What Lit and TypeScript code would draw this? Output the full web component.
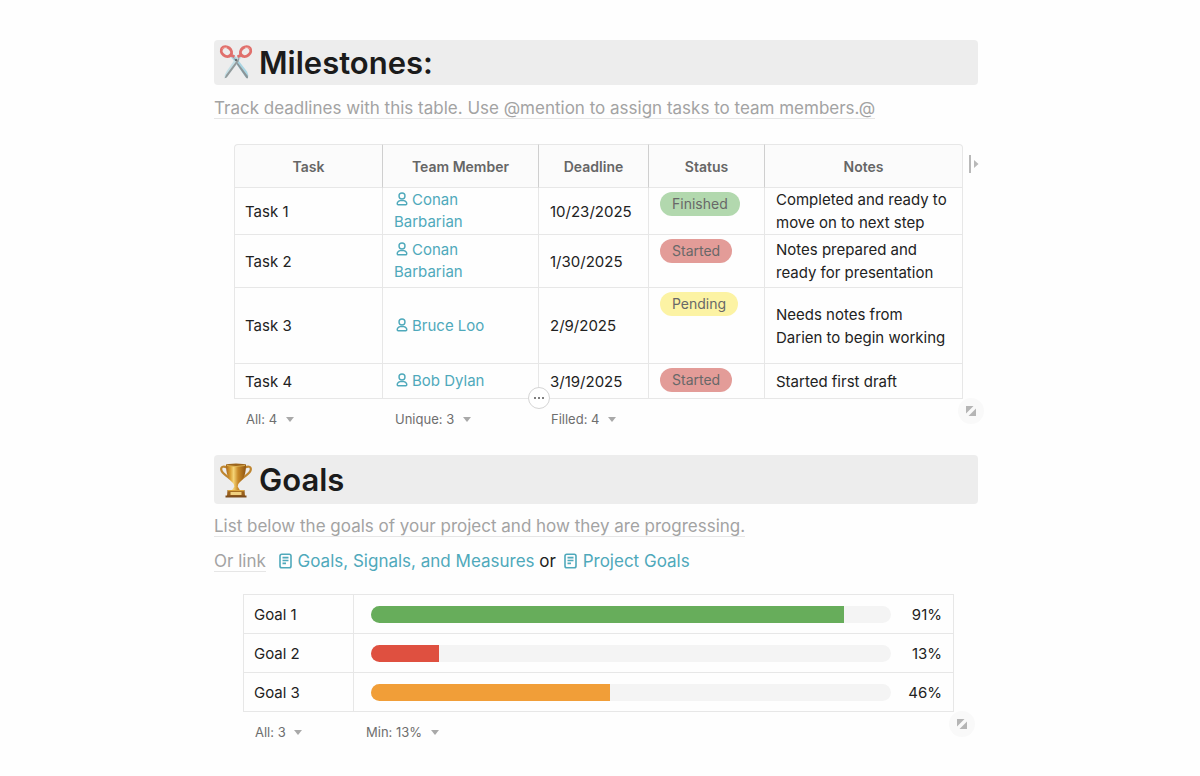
import { LitElement, html, css, svg } from "lit";
import { customElement, property } from "lit/decorators.js";

interface Task {
  name: string;
  member: string;
  deadline: string;
  status: "Finished" | "Started" | "Pending";
  notes: string;
  height: number;
}

const TASKS: Task[] = [
  { name: "Task 1", member: "Conan Barbarian", deadline: "10/23/2025", status: "Finished", notes: "Completed and ready to move on to next step", height: 47 },
  { name: "Task 2", member: "Conan Barbarian", deadline: "1/30/2025", status: "Started", notes: "Notes prepared and ready for presentation", height: 53 },
  { name: "Task 3", member: "Bruce Loo", deadline: "2/9/2025", status: "Pending", notes: "Needs notes from Darien to begin working", height: 76 },
  { name: "Task 4", member: "Bob Dylan", deadline: "3/19/2025", status: "Started", notes: "Started first draft", height: 35 },
];

const GOALS = [
  { name: "Goal 1", value: 91, tone: "green" },
  { name: "Goal 2", value: 13, tone: "red" },
  { name: "Goal 3", value: 46, tone: "orange" },
];

const personIcon = svg`<svg class="person" viewBox="0 0 12 14" width="12" height="14" aria-hidden="true">
  <circle cx="6" cy="4" r="3"/><path d="M4 8.600C2.200 9.100 1.200 10.200 1.200 11.700c0 .7.400 1.100 1 1.100h7.600c.6 0 1-.4 1-1.100 0-1.500-1-2.600-2.800-3.100Z"/></svg>`;

const docIcon = svg`<svg class="doc" viewBox="0 0 13 16" width="13" height="16" aria-hidden="true">
  <rect x="1" y="1.200" width="11" height="13.600" rx="1.800"/><path d="M3.500 4.600h6M3.500 7.500h6M3.500 10.400h3.500"/></svg>`;

const scissors = svg`<svg class="emoji" viewBox="0 2 36 36" width="36" height="36" aria-hidden="true">
  <path d="M11.500 12.500L15.800 11.600 29 28.500Q31 32 30 35.200L27.800 34.600 16.500 18.500Z" fill="#a9d5e2"/>
  <path d="M15 13.500L17 18.500 28.500 35.200 30 35.200 29.800 33Z" fill="#8b9497"/>
  <path d="M24.500 12.500L20.200 11.600 8.500 28.500Q6 32 6.600 35.200L8.800 34.200 20.500 18.500Z" fill="#c5dfe5"/>
  <path d="M21.500 14L8 32 6.600 35.200 8.700 34.600 20.500 18.500Z" fill="#929a9b"/>
  <circle cx="18" cy="17" r="1.200" fill="#646d70"/>
  <ellipse cx="8.400" cy="8.600" rx="5.500" ry="4.500" transform="rotate(38 8.400 8.600)" fill="none" stroke="#e0706c" stroke-width="3"/>
  <ellipse cx="27.600" cy="8.600" rx="5.500" ry="4.500" transform="rotate(-38 27.600 8.600)" fill="none" stroke="#e0706c" stroke-width="3"/>
  <path d="M12.500 12l4 1.800M23.500 12l-4 1.800" stroke="#e0706c" stroke-width="2.600"/>
  <path d="M4 6.200q2-2.500 5-1.800M32 6.200q-2-2.500-5-1.800" fill="none" stroke="#f39a93" stroke-width="1"/></svg>`;

const trophy = svg`<svg class="emoji" viewBox="0 0 36 36" width="36" height="36" aria-hidden="true">
  <defs><linearGradient id="gold"><stop stop-color="#a8671a"/><stop offset=".22" stop-color="#dba236"/><stop offset=".38" stop-color="#f5d476"/><stop offset=".6" stop-color="#c98a28"/><stop offset="1" stop-color="#8e5412"/></linearGradient></defs>
  <path d="M9 5.500C5 3.500 2.600 5 3.300 8c.8 3.500 4.800 5 9 9M27 5.500c4-2 6.400-.5 5.700 2.500-.8 3.500-4.800 5-9 9" fill="none" stroke="#bf8630" stroke-width="2.200"/>
  <path d="M8 2.500h20c0 9-2 14.500-6 17.500q-2.300 1.600-2.300 4.500l2.300 4h-8l2.300-4q0-2.900-2.300-4.500C10 17 8 11.500 8 2.500Z" fill="url(#gold)"/>
  <ellipse cx="18" cy="3" rx="10" ry="1.500" fill="#9c651c"/>
  <path d="M9 3.500q9 2 18 0" fill="none" stroke="#e8bf5c" stroke-width=".8"/>
  <path d="M9.500 28h17l.5 6H9Z" fill="#9a611d"/><path d="M10 28h16v1.200H10Z" fill="#dca63e"/><rect x="12.500" y="30" width="11" height="3" fill="#f0d080"/>
  <path d="M7.500 33.500h21v2h-21Z" fill="#7d4d1c"/></svg>`;

const resizeIcon = svg`<svg viewBox="0 0 10 10" width="10" height="10" aria-hidden="true"><path d="M0 0h7.500L0 7.500ZM10 2.500V10H2.500Z"/></svg>`;

@customElement("column-summary")
class ColumnSummary extends LitElement {
  @property() label = "";
  @property() value = "";

  static styles = css`
    :host { display: inline-block; }
    .summary { display: inline-flex; align-items: center; gap: 8px; }
    .choice {
      appearance: none; border: 0; padding: 0; margin: 0; background: none;
      font: 13px/16px Inter, "Liberation Sans", sans-serif; color: #6e6e6e;
    }
    .caret { fill: #a9a9a9; }
  `;

  render() {
    return html`<label class="summary">
      <select class="choice" aria-label=${this.label + " summary"}><option>${this.value}</option></select>
      <svg class="caret" viewBox="0 0 8 5" width="8" height="5" aria-hidden="true"><path d="M0 0h8L4 5Z"/></svg>
    </label>`;
  }
}

@customElement("app-root")
class AppRoot extends LitElement {
  static styles = css`
    :host {
      display: block; min-height: 100vh; box-sizing: border-box; padding: 40px 8px 24px 0;
      background: #fefefe; color: #222; font-family: Inter, "Liberation Sans", sans-serif;
    }
    .page { max-width: 764px; margin: 0 auto; }
    .title {
      display: flex; align-items: center; gap: 5px; margin: 0; padding: 2px 4px;
      border-radius: 4px; background: #ededed; color: #1b1b1b;
      font-size: 31px; line-height: 41px; font-weight: 600;
    }
    .title.roomy { padding: 4px; margin-top: 17px; }
    .emoji { flex: none; }
    .hint { margin: 13px 0 0; font-size: 17px; line-height: 21px; color: #a3a3a3; }
    .title.roomy + .hint { margin-top: 12px; }
    .hint.links { margin-top: 14px; }
    .underlined { border-bottom: 1px solid #e6e6e6; }
    a { color: #4fa9bb; text-decoration: none; }
    .doc { fill: none; stroke: #4fa9bb; stroke-width: 1.6; vertical-align: -2px; margin-right: 6px; }
    .doc-link { margin-left: 3px; }
    .doc-link.first { margin-left: 8px; }
    .or { color: #222; }
    .frame { position: relative; }
    .tasks-frame { margin: 25px 15px 0 20px; }
    .goals-frame { margin: 22px 24px 0 29px; }
    table { width: 100%; table-layout: fixed; border-collapse: separate; border-spacing: 0; font-size: 15px; }
    th, td { box-sizing: border-box; padding: 0 11px; text-align: left; font-weight: 400; }
    tbody th, tbody td { border: 0 solid #e7e7e7; border-width: 0 1px 1px 0; }
    tbody th { border-left-width: 1px; padding-left: 10px; }
    .tasks thead th {
      height: 44px; text-align: center; font-size: 14px; font-weight: 600; color: #666; background: #fbfbfb;
      border: 0 solid #e7e7e7; border-width: 1px 1px 1px 0; border-right-color: #cfcfcf;
    }
    .tasks thead th:first-child { border-left: 1px solid #e7e7e7; border-top-left-radius: 4px; }
    .tasks thead th:last-child { border-right-color: #e7e7e7; border-top-right-radius: 4px; }
    .c-task { width: 149px; } .c-member { width: 156px; } .c-date { width: 110px; } .c-status { width: 116px; }
    .member { line-height: 22px; }
    .member a { display: inline-block; max-width: 100px; }
    .person { fill: none; stroke: #4fa9bb; stroke-width: 1.4; vertical-align: -1px; margin: 0 4px 0 2px; }
    .notes { line-height: 23px; }
    .tasks td.status { vertical-align: top; padding-top: 4px; }
    .pill {
      display: inline-block; vertical-align: top; padding: 0 12px; border-radius: 12px;
      font-size: 14px; line-height: 24px; color: #686868;
    }
    .Finished { background: #b2d8ae; } .Started { background: #e39c98; } .Pending { background: #fcf3a4; }
    tfoot td { height: 39px; padding-left: 12px; position: relative; }
    .round { position: absolute; display: grid; place-items: center; border-radius: 50%; padding: 0; }
    .more { width: 22px; height: 22px; left: -11px; top: -12px; border: 1px solid #d5d5d5; background: #fff; fill: #555; }
    .resize { width: 26px; height: 26px; right: -21px; top: 254px; border: 0; background: #f9f9f9; fill: #b5b5b5; }
    .goals-frame .resize { top: 117px; }
    .add-column { position: absolute; left: 100%; top: 11px; margin-left: 6px; padding: 0; border: 0; background: none; fill: #b9b9b9; line-height: 0; }
    .goals tbody tr { height: 39px; }
    .goals tbody tr:first-child { height: 40px; }
    .goals tbody tr:first-child > * { border-top-width: 1px; }
    .c-goal { width: 111px; }
    .meter { display: flex; align-items: center; padding-left: 6px; }
    .track { flex: 1; height: 17px; border-radius: 9px; overflow: hidden; background: #f4f4f4; }
    .fill { height: 100%; }
    .green { background: #67ad5b; } .red { background: #df5040; } .orange { background: #f19e38; }
    .percent { width: 51px; text-align: right; }
  `;

  render() {
    return html`<main class="page">
      <h1 class="title">${scissors}Milestones:</h1>
      <p class="hint"><span class="underlined">Track deadlines with this table. Use @mention to assign tasks to team members.@</span></p>
      <div class="frame tasks-frame">
        <table class="tasks">
          <colgroup><col class="c-task"><col class="c-member"><col class="c-date"><col class="c-status"><col></colgroup>
          <thead><tr>${["Task", "Team Member", "Deadline", "Status", "Notes"].map((h) => html`<th scope="col">${h}</th>`)}</tr></thead>
          <tbody>${TASKS.map((t) => html`<tr style="height:${t.height}px">
            <th scope="row">${t.name}</th>
            <td class="member"><a href="#">${personIcon}${t.member}</a></td>
            <td>${t.deadline}</td>
            <td class="status"><span class="pill ${t.status}">${t.status}</span></td>
            <td class="notes">${t.notes}</td>
          </tr>`)}</tbody>
          <tfoot><tr>
            <td><column-summary label="Task" value="All: 4"></column-summary></td>
            <td><column-summary label="Team Member" value="Unique: 3"></column-summary></td>
            <td><column-summary label="Deadline" value="Filled: 4"></column-summary>
              <button class="round more" aria-label="More options"><svg viewBox="0 0 12 4" width="12" height="4" aria-hidden="true"><circle cx="2" cy="2" r="1"/><circle cx="6" cy="2" r="1"/><circle cx="10" cy="2" r="1"/></svg></button></td>
            <td></td><td></td>
          </tr></tfoot>
        </table>
        <button class="add-column" aria-label="Expand columns"><svg viewBox="0 0 10 18" width="10" height="18" aria-hidden="true"><path d="M0 0h2v18H0ZM5 5l4.500 4L5 13Z"/></svg></button>
        <button class="round resize" aria-label="Resize tasks table">${resizeIcon}</button>
      </div>

      <h1 class="title roomy">${trophy}Goals</h1>
      <p class="hint"><span class="underlined">List below the goals of your project and how they are progressing.</span></p>
      <p class="hint links"><span class="underlined">Or link</span> <a class="doc-link first" href="#">${docIcon}Goals, Signals, and Measures</a> <span class="or">or</span> <a class="doc-link" href="#">${docIcon}Project Goals</a></p>
      <div class="frame goals-frame">
        <table class="goals" aria-label="Goals">
          <colgroup><col class="c-goal"><col></colgroup>
          <tbody>${GOALS.map((g) => html`<tr>
            <th scope="row">${g.name}</th>
            <td><div class="meter"><div class="track"><div class="fill ${g.tone}" style="width:${g.value}%"></div></div><span class="percent">${g.value}%</span></div></td>
          </tr>`)}</tbody>
          <tfoot><tr>
            <td><column-summary label="Goal" value="All: 3"></column-summary></td>
            <td><column-summary label="Progress" value="Min: 13%"></column-summary></td>
          </tr></tfoot>
        </table>
        <button class="round resize" aria-label="Resize goals table">${resizeIcon}</button>
      </div>
    </main>`;
  }
}
